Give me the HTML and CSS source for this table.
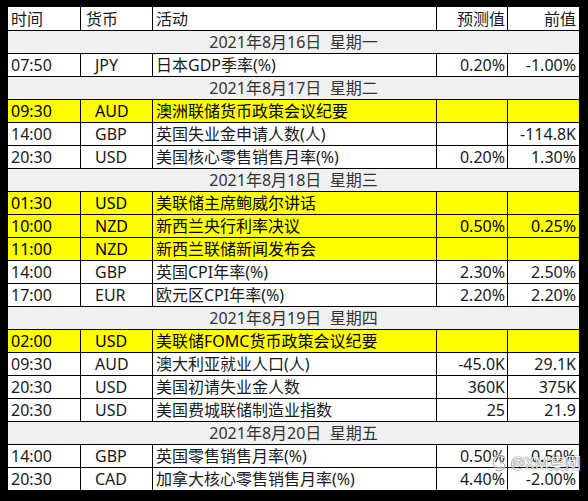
FILE: index.html
```html
<!DOCTYPE html>
<html lang="zh-CN">

<head>
  <meta charset="UTF-8" />
  <meta name="viewport" content="width=device-width, initial-scale=1.0" />
  <title>财经日历</title>
  <link rel="stylesheet" href="styles.css">
</head>

<body>
  <div class="calendar">
    <div class="sheet">
      <!-- 表头 -->
      <div class="cell head time">时间</div>
      <div class="cell head cur">货币</div>
      <div class="cell head act">活动</div>
      <div class="cell head num">预测值</div>
      <div class="cell head num last">前值</div>

      <div class="day">2021年8月16日&nbsp;&nbsp;星期一</div>
      <div class="cell time">07:50</div>
      <div class="cell cur">JPY</div>
      <div class="cell act">日本GDP季率(%)</div>
      <div class="cell num">0.20%</div>
      <div class="cell num last">-1.00%</div>

      <div class="day">2021年8月17日&nbsp;&nbsp;星期二</div>
      <div class="cell time hl">09:30</div>
      <div class="cell cur hl">AUD</div>
      <div class="cell act hl">澳洲联储货币政策会议纪要</div>
      <div class="cell num hl"></div>
      <div class="cell num last hl"></div>
      <div class="cell time">14:00</div>
      <div class="cell cur">GBP</div>
      <div class="cell act">英国失业金申请人数(人)</div>
      <div class="cell num"></div>
      <div class="cell num last">-114.8K</div>
      <div class="cell time">20:30</div>
      <div class="cell cur">USD</div>
      <div class="cell act">美国核心零售销售月率(%)</div>
      <div class="cell num">0.20%</div>
      <div class="cell num last">1.30%</div>

      <div class="day">2021年8月18日&nbsp;&nbsp;星期三</div>
      <div class="cell time hl">01:30</div>
      <div class="cell cur hl">USD</div>
      <div class="cell act hl">美联储主席鲍威尔讲话</div>
      <div class="cell num hl"></div>
      <div class="cell num last hl"></div>
      <div class="cell time hl">10:00</div>
      <div class="cell cur hl">NZD</div>
      <div class="cell act hl">新西兰央行利率决议</div>
      <div class="cell num hl">0.50%</div>
      <div class="cell num last hl">0.25%</div>
      <div class="cell time hl">11:00</div>
      <div class="cell cur hl">NZD</div>
      <div class="cell act hl">新西兰联储新闻发布会</div>
      <div class="cell num hl"></div>
      <div class="cell num last hl"></div>
      <div class="cell time">14:00</div>
      <div class="cell cur">GBP</div>
      <div class="cell act">英国CPI年率(%)</div>
      <div class="cell num">2.30%</div>
      <div class="cell num last">2.50%</div>
      <div class="cell time">17:00</div>
      <div class="cell cur">EUR</div>
      <div class="cell act">欧元区CPI年率(%)</div>
      <div class="cell num">2.20%</div>
      <div class="cell num last">2.20%</div>

      <div class="day">2021年8月19日&nbsp;&nbsp;星期四</div>
      <div class="cell time hl">02:00</div>
      <div class="cell cur hl">USD</div>
      <div class="cell act hl">美联储FOMC货币政策会议纪要</div>
      <div class="cell num hl"></div>
      <div class="cell num last hl"></div>
      <div class="cell time">09:30</div>
      <div class="cell cur">AUD</div>
      <div class="cell act">澳大利亚就业人口(人)</div>
      <div class="cell num">-45.0K</div>
      <div class="cell num last">29.1K</div>
      <div class="cell time">20:30</div>
      <div class="cell cur">USD</div>
      <div class="cell act">美国初请失业金人数</div>
      <div class="cell num">360K</div>
      <div class="cell num last">375K</div>
      <div class="cell time">20:30</div>
      <div class="cell cur">USD</div>
      <div class="cell act">美国费城联储制造业指数</div>
      <div class="cell num">25</div>
      <div class="cell num last">21.9</div>

      <div class="day">2021年8月20日&nbsp;&nbsp;星期五</div>
      <div class="cell time">14:00</div>
      <div class="cell cur">GBP</div>
      <div class="cell act">英国零售销售月率(%)</div>
      <div class="cell num">0.50%</div>
      <div class="cell num last">0.50%</div>
      <div class="cell time">20:30</div>
      <div class="cell cur">CAD</div>
      <div class="cell act">加拿大核心零售销售月率(%)</div>
      <div class="cell num">4.40%</div>
      <div class="cell num last">-2.00%</div>
    </div>

    <!-- 水印 -->
    <div class="mark">
      <svg width="20" height="20" viewBox="0 0 18 18">
        <path d="M13 4 C10 1 4 2 3 7 C2 12 7 15 11 13 M9 9 C12 8 14 10 13 13 C12 16 7 17 5 15" fill="none" stroke="#fff" stroke-width="1.8" />
        <path d="M13 4 C10 1 4 2 3 7 C2 12 7 15 11 13 M9 9 C12 8 14 10 13 13 C12 16 7 17 5 15" fill="none" stroke="#555" stroke-width="0.6" />
      </svg>
      <span>@XM集团</span>
    </div>
  </div>
</body>

</html>
```

FILE: styles.css
```css
body {
  margin: 0;
  padding: 0;
  background-color: #000;
  font-family: "Noto Sans", "Noto Sans CJK SC", sans-serif;
}

/* 外层容器 */
.calendar {
  position: relative;
  width: 588px;
  height: 501px;
  padding: 7px 0 0 8px;
  box-sizing: border-box;
}

/* 表格主体，用黑色背景加间隙画出网格线 */
.sheet {
  display: grid;
  grid-template-columns: 72px 71px 283px 70px 71px;
  grid-template-rows: 23px;
  grid-auto-rows: 22px;
  gap: 1px;
  width: 571px;
  background-color: #000;
}

.sheet .cell {
  background-color: #fff;
  color: #1a1a1a;
  font-size: 16px;
  line-height: 22px;
  white-space: nowrap;
  overflow: hidden;
}

.sheet .head {
  line-height: 24px;
}

.sheet .time {
  padding-left: 3px;
}

.sheet .cur {
  padding-left: 14px;
}

.sheet .head.cur {
  padding-left: 5px;
}

.sheet .act {
  padding-left: 3px;
}

.sheet .num {
  text-align: right;
  padding-right: 2px;
}

.sheet .num.last {
  padding-right: 3px;
}

/* 重点事件高亮 */
.sheet .hl {
  background-color: #ffff00;
  color: #000;
}

/* 日期行 */
.sheet .day {
  grid-column: 1 / -1;
  background-color: #f0f0f0;
  color: #333;
  font-size: 16px;
  line-height: 22px;
  text-align: center;
}

/* 右下角水印 */
.mark {
  position: absolute;
  right: 7px;
  bottom: 28px;
  display: flex;
  align-items: center;
  gap: 1px;
  opacity: 0.85;
}

.mark span {
  color: #fff;
  font-size: 16px;
  line-height: 20px;
  text-shadow: 0 0 1px #333, 0 0 1px #333;
}
```
